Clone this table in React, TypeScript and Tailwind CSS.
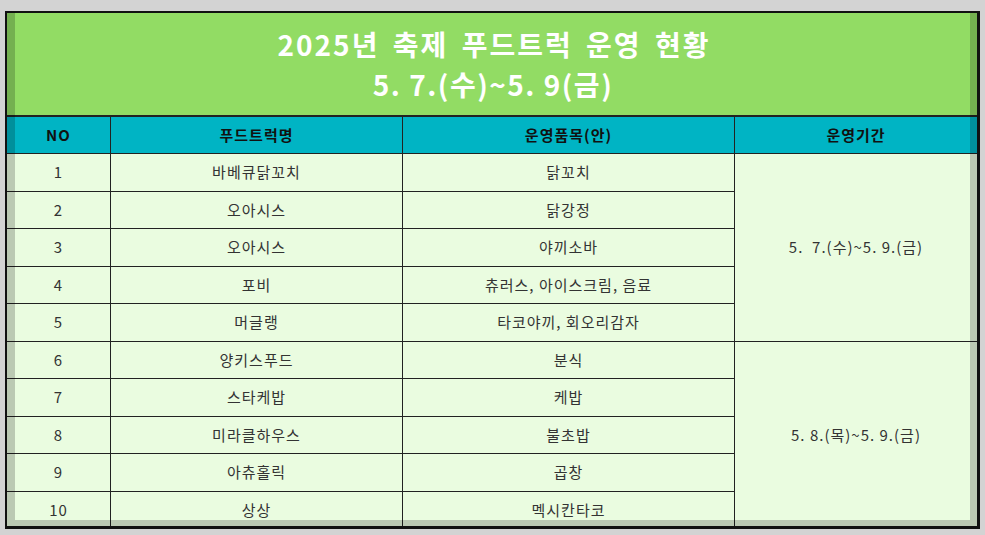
import React from 'react';

const rows = [
  { no: 1, name: '바베큐닭꼬치', menu: '닭꼬치' },
  { no: 2, name: '오아시스', menu: '닭강정' },
  { no: 3, name: '오아시스', menu: '야끼소바' },
  { no: 4, name: '포비', menu: '츄러스, 아이스크림, 음료' },
  { no: 5, name: '머글랭', menu: '타코야끼, 회오리감자' },
  { no: 6, name: '양키스푸드', menu: '분식' },
  { no: 7, name: '스타케밥', menu: '케밥' },
  { no: 8, name: '미라클하우스', menu: '불초밥' },
  { no: 9, name: '아츄홀릭', menu: '곱창' },
  { no: 10, name: '상상', menu: '멕시칸타코' },
];

const font = { fontFamily: '"Noto Sans CJK KR", "Noto Sans", sans-serif' };

const head = 'bg-[#00b4c4] border-b-[1.5px] border-[#222] flex items-center justify-center font-bold text-[#111] text-[15px] tracking-[1px]';

const App = () => {
  return (
    <div className="w-[985px] h-[535px] bg-[#d3d3d3] pt-[11px] pl-[5px]" style={font}>
      {/* Frame */}
      <div className="relative w-[975px] h-[518px] border-2 border-r-[3px] border-b-[3px] border-[#111] overflow-hidden">
        {/* Title */}
        <div className="h-[104px] bg-[#92dc64] border-b-2 border-[#222] flex flex-col items-center justify-center text-white font-bold text-[28px] leading-[40px] tracking-[2px]">
          <div className="pl-[4px] [word-spacing:5px]">2025년 축제 푸드트럭 운영 현황</div>
          <div className="pl-[2px] tracking-[1.5px]">5. 7.(수)~5. 9(금)</div>
        </div>

        {/* Table */}
        <div className="grid grid-cols-[104px_292px_332px_242px] grid-rows-[37px_repeat(10,37.5px)] bg-[#eafce0] text-[15px] tracking-[1px] text-[#333]">
          {/* Header */}
          <div className={head + ' border-r'}>NO</div>
          <div className={head + ' border-r'}>푸드트럭명</div>
          <div className={head + ' border-r'}>운영품목(안)</div>
          <div className={head}>운영기간</div>

          {rows.map((r, i) => (
            <React.Fragment key={r.no}>
              <div className="border-r border-b-[1.5px] border-[#222] flex items-center justify-center" style={{ gridRow: i + 2, gridColumn: 1 }}>{r.no}</div>
              <div className="border-r border-b-[1.5px] border-[#222] flex items-center justify-center" style={{ gridRow: i + 2, gridColumn: 2 }}>{r.name}</div>
              <div className="border-r border-b-[1.5px] border-[#222] flex items-center justify-center" style={{ gridRow: i + 2, gridColumn: 3 }}>{r.menu}</div>
            </React.Fragment>
          ))}

          {/* Period cells spanning rows */}
          <div className="col-start-4 row-start-2 row-span-5 border-b-[1.5px] border-[#222] flex items-center justify-center whitespace-pre">5.  7.(수)~5. 9.(금)</div>
          <div className="col-start-4 row-start-7 row-span-5 border-b-[1.5px] border-[#222] flex items-center justify-center whitespace-pre pt-[1px]">5. 8.(목)~5. 9.(금)</div>
        </div>

        {/* Dark frame edges over the sheet */}
        <div className="pointer-events-none absolute inset-0 border-l-8 border-r-[7px] border-b-[6px] border-[rgba(0,0,0,0.2)]" />
      </div>
    </div>
  );
};

export default App;
